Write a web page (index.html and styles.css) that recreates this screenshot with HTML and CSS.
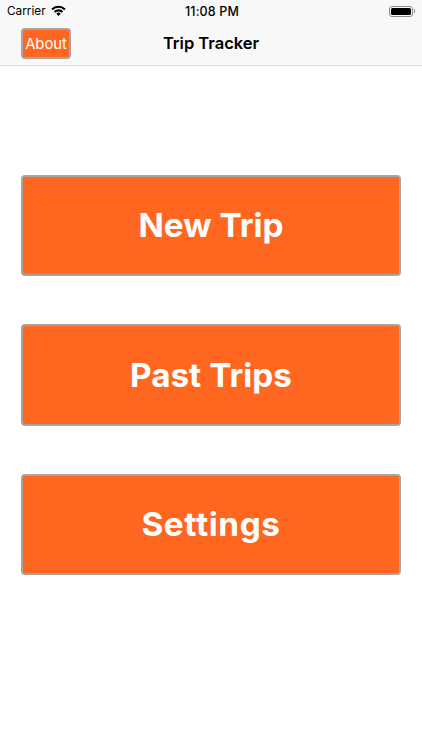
FILE: index.html

```html
<!DOCTYPE html>
<html lang="en">
<head>
  <meta charset="UTF-8">
  <meta name="viewport" content="width=device-width, initial-scale=1.0">
  <title>Trip Tracker</title>
  <link rel="stylesheet" href="styles.css">
</head>
<body>
  <div class="top-bar">
    <div class="status-bar">
      <div class="status-left">
        <span class="carrier">Carrier</span>
        <svg class="wifi" width="15" height="11" viewBox="0 0 15 11">
          <path d="M0.3 3.7 A10.2 10.2 0 0 1 14.7 3.7 L13.2 5.2 A8.1 8.1 0 0 0 1.8 5.2 Z" fill="#000"/>
          <path d="M2.8 6.2 A6.7 6.7 0 0 1 12.2 6.2 L10.7 7.7 A4.6 4.6 0 0 0 4.3 7.7 Z" fill="#000"/>
          <path d="M5.3 8.7 A3.1 3.1 0 0 1 9.7 8.7 L7.5 10.9 Z" fill="#000"/>
        </svg>
      </div>
      <span class="clock">11:08 PM</span>
      <div class="battery">
        <div class="battery-body"><div class="battery-fill"></div></div>
        <div class="battery-tip"></div>
      </div>
    </div>
    <div class="nav-bar">
      <button class="about-btn">About</button>
      <div class="nav-title">Trip Tracker</div>
    </div>
  </div>

  <div class="menu">
    <button class="menu-btn">New Trip</button>
    <button class="menu-btn">Past Trips</button>
    <button class="menu-btn settings">Settings</button>
  </div>
</body>
</html>
```

FILE: styles.css

```css
body {
  font-family: Inter, "Liberation Sans", sans-serif;
  background: #fff;
  margin: 0;
  height: 750px;
  overflow: hidden;
}

.top-bar {
  background: #f8f8f8;
  border-bottom: 1px solid #dcdcdc;
  height: 65px;
}

.status-bar {
  display: grid;
  grid-template-columns: 1fr auto 1fr;
  align-items: center;
  height: 22px;
  padding: 0 7px;
  font-size: 12.5px;
  color: #000;
}

.status-left {
  display: flex;
  align-items: center;
  gap: 5px;
}

.carrier {
  font-size: 11.8px;
}

.wifi {
  margin-bottom: 2px;
}

.clock {
  font-weight: 500;
  letter-spacing: 0.15px;
  margin-left: 2px;
}

.battery {
  display: flex;
  align-items: center;
  justify-self: end;
}

.battery-body {
  width: 24px;
  height: 11px;
  box-sizing: border-box;
  border: 1px solid #8a8a8a;
  border-radius: 3px;
  padding: 1px;
}

.battery-fill {
  height: 100%;
  background: #000;
  border-radius: 1.5px;
}

.battery-tip {
  width: 1px;
  height: 4px;
  background: #9a9a9a;
  margin-left: 1px;
}

.nav-bar {
  display: flex;
  align-items: center;
  height: 43px;
  padding-left: 21px;
  position: relative;
}

.about-btn {
  width: 50px;
  height: 31px;
  padding: 0;
  background: #ff6720;
  color: #fff;
  border: 2px solid #aaa3a0;
  border-radius: 4px;
  font-family: inherit;
  font-size: 14.8px;
  font-weight: 400;
}

.nav-title {
  position: absolute;
  left: 0;
  right: 0;
  padding-bottom: 2px;
  text-align: center;
  font-size: 16.5px;
  font-weight: 600;
  pointer-events: none;
}

.menu {
  display: flex;
  flex-direction: column;
  gap: 48px;
  padding: 108.5px 21px 0;
}

.menu-btn {
  height: 101.5px;
  padding: 0;
  background: #ff6720;
  color: #fff;
  border: 2px solid #aaa3a0;
  border-radius: 4px;
  font-family: inherit;
  font-size: 33.3px;
  font-weight: 700;
}

.settings {
  letter-spacing: 0.6px;
}
```
